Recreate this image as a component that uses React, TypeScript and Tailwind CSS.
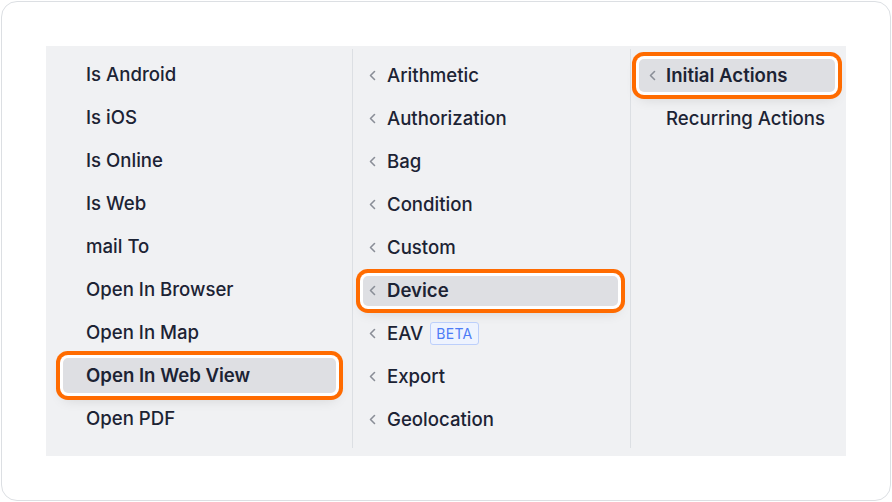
import React from "react";

const Chevron = () => (
  <svg width="7" height="11" viewBox="0 0 7 11" className="shrink-0">
    <polyline points="5.5,1.5 1.5,5.5 5.5,9.5" fill="none" stroke="#8a8e97" strokeWidth="1.6" strokeLinecap="round" strokeLinejoin="round" />
  </svg>
);

const ring = "shadow-[0_0_0_3px_#ffffff,0_0_0_7px_#ff6b00,0_6px_14px_rgba(0,0,0,0.14)]";

const col1 = ["Is Android", "Is iOS", "Is Online", "Is Web", "mail To", "Open In Browser", "Open In Map", "Open In Web View", "Open PDF"];
const col2 = ["Arithmetic", "Authorization", "Bag", "Condition", "Custom", "Device", "EAV", "Export", "Geolocation"];

export default function App() {
  return (
    <div className="w-[892px] h-[502px] bg-white p-px" style={{ fontFamily: "Inter, 'Noto Sans', sans-serif" }}>
      <div className="h-full rounded-[16px] border border-[#dcdfe3] p-[44px]">
        <div className="flex h-[410px] bg-[#f0f1f3] pt-[3px] pb-[8px] text-[18.6px] text-[#1c2334]">
          {/* Column 1 */}
          <div className="w-[307px] border-r border-[#dcdfe3] pt-[4px] pl-[17px] pr-[16px] flex flex-col">
            {col1.map((t) =>
              t === "Open In Web View" ? (
                <div key={t} className="h-[43px] flex items-center">
                  <div className={`w-full h-[35px] rounded-[5px] bg-[#dedfe3] flex items-center pl-[23px] font-semibold ${ring}`}>{t}</div>
                </div>
              ) : (
                <div key={t} className="h-[43px] flex items-center pl-[23px] font-medium">{t}</div>
              )
            )}
          </div>
          {/* Column 2 */}
          <div className="w-[278px] border-r border-[#dcdfe3] pt-[5px] pl-[10px] pr-[12px] flex flex-col">
            {col2.map((t) =>
              t === "Device" ? (
                <div key={t} className="h-[43px] flex items-center">
                  <div className={`w-full h-[30px] rounded-[5px] bg-[#dedfe3] flex items-center pl-[6px] gap-[11px] font-semibold ${ring}`}>
                    <Chevron />
                    <span>{t}</span>
                  </div>
                </div>
              ) : (
                <div key={t} className="h-[43px] flex items-center pl-[6px] gap-[11px] font-medium">
                  <Chevron />
                  <span>{t}</span>
                  {t === "EAV" && (
                    <span className="ml-[-4px] h-[23px] px-[5px] flex items-center rounded-[3px] border border-[#bccffb] bg-[#eef3fe] text-[14px] font-normal text-[#4d7cf6] tracking-[0.3px]">BETA</span>
                  )}
                </div>
              )
            )}
          </div>
          {/* Column 3 */}
          <div className="flex-1 pt-[5px] pl-[8px] pr-[11px] flex flex-col">
            <div className="h-[43px] flex items-center">
              <div className={`w-full h-[33px] rounded-[5px] bg-[#dedfe3] flex items-center pl-[10px] gap-[10px] font-semibold ${ring}`}>
                <Chevron />
                <span>Initial Actions</span>
              </div>
            </div>
            <div className="h-[43px] flex items-center pl-[27px] font-medium">Recurring Actions</div>
          </div>
        </div>
      </div>
    </div>
  );
}
